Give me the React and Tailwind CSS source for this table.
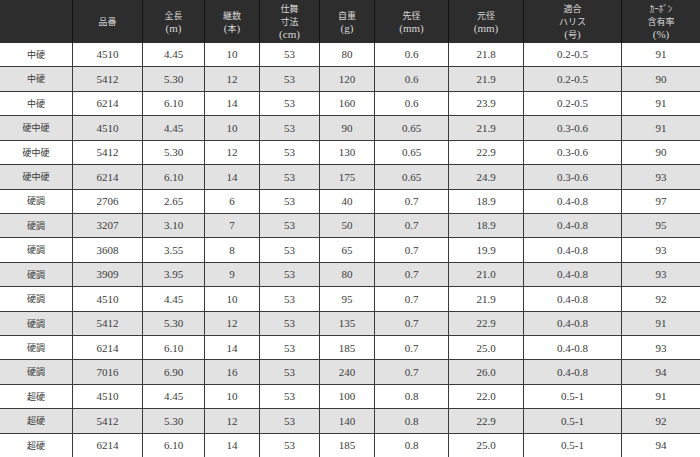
import React from "react";

const rows = [
  ["中硬", "4510", "4.45", "10", "53", "80", "0.6", "21.8", "0.2-0.5", "91"],
  ["中硬", "5412", "5.30", "12", "53", "120", "0.6", "21.9", "0.2-0.5", "90"],
  ["中硬", "6214", "6.10", "14", "53", "160", "0.6", "23.9", "0.2-0.5", "91"],
  ["硬中硬", "4510", "4.45", "10", "53", "90", "0.65", "21.9", "0.3-0.6", "91"],
  ["硬中硬", "5412", "5.30", "12", "53", "130", "0.65", "22.9", "0.3-0.6", "90"],
  ["硬中硬", "6214", "6.10", "14", "53", "175", "0.65", "24.9", "0.3-0.6", "93"],
  ["硬調", "2706", "2.65", "6", "53", "40", "0.7", "18.9", "0.4-0.8", "97"],
  ["硬調", "3207", "3.10", "7", "53", "50", "0.7", "18.9", "0.4-0.8", "95"],
  ["硬調", "3608", "3.55", "8", "53", "65", "0.7", "19.9", "0.4-0.8", "93"],
  ["硬調", "3909", "3.95", "9", "53", "80", "0.7", "21.0", "0.4-0.8", "93"],
  ["硬調", "4510", "4.45", "10", "53", "95", "0.7", "21.9", "0.4-0.8", "92"],
  ["硬調", "5412", "5.30", "12", "53", "135", "0.7", "22.9", "0.4-0.8", "91"],
  ["硬調", "6214", "6.10", "14", "53", "185", "0.7", "25.0", "0.4-0.8", "93"],
  ["硬調", "7016", "6.90", "16", "53", "240", "0.7", "26.0", "0.4-0.8", "94"],
  ["超硬", "4510", "4.45", "10", "53", "100", "0.8", "22.0", "0.5-1", "91"],
  ["超硬", "5412", "5.30", "12", "53", "140", "0.8", "22.9", "0.5-1", "92"],
  ["超硬", "6214", "6.10", "14", "53", "185", "0.8", "25.0", "0.5-1", "94"],
];

const headers = [
  [],
  ["品番"],
  ["全長", "(m)"],
  ["継数", "(本)"],
  ["仕舞", "寸法", "(cm)"],
  ["自重", "(g)"],
  ["先径", "(mm)"],
  ["元径", "(mm)"],
  ["適合", "ハリス", "(号)"],
  ["ｶｰﾎﾞﾝ", "含有率", "(%)"],
];

const cols =
  "grid grid-cols-[73px_70px_62px_55px_60px_55px_74px_75px_98px_78px]";

const jp = "font-['Noto_Sans_CJK_JP','Noto_Sans',sans-serif]";
const serif = "font-['Liberation_Serif','Noto_Sans_CJK_JP',serif]";

function HeaderLine({ t }) {
  const isUnit = t.startsWith("(");
  const cjkUnit = t === "(本)" || t === "(号)";
  if (cjkUnit) {
    return (
      <div className={`${serif} text-[11px] leading-[13px]`}>
        (<span className={`${jp} text-[9px]`}>{t.slice(1, -1)}</span>)
      </div>
    );
  }
  return (
    <div
      className={
        isUnit
          ? `${serif} text-[11px] leading-[13px]`
          : `${jp} text-[9px] leading-[13px]`
      }
    >
      {t}
    </div>
  );
}

export default function App() {
  return (
    <div className="w-[700px] h-[457px] overflow-hidden bg-white">
      <div className={`${cols} h-[43px] bg-[#2d2d2d] text-[#d8d8d8]`}>
        {headers.map((h, i) => (
          <div
            key={i}
            className={`flex flex-col items-center justify-center text-center ${
              i < 9 ? "border-r border-[#111]" : ""
            }`}
          >
            {h.map((t, j) => (
              <HeaderLine key={j} t={t} />
            ))}
          </div>
        ))}
      </div>
      {rows.map((r, ri) => (
        <div
          key={ri}
          className={`${cols} h-[24.43px] border-b border-[#3a3a3a] ${
            ri % 2 === 1 ? "bg-[#e2e2e2]" : "bg-white"
          } text-[#3a3a3a]`}
        >
          {r.map((c, ci) => (
            <div
              key={ci}
              className={`flex items-center justify-center ${
                ci < 9 ? "border-r border-[#3a3a3a]" : ""
              } ${ci === 0 ? `${jp} text-[9px]` : `${serif} text-[11px]`}`}
            >
              {c}
            </div>
          ))}
        </div>
      ))}
    </div>
  );
}
